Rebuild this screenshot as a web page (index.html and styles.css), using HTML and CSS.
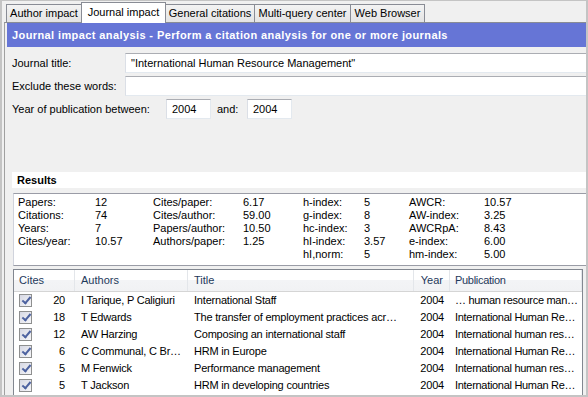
FILE: index.html
```html
<!DOCTYPE html>
<html lang="en">

<head>
  <meta charset="UTF-8">
  <title>Journal impact</title>
  <link rel="stylesheet" href="styles.css">
</head>

<body>

  <div class="window">
    <div class="tabs">
      <div class="tab tab-author">Author impact</div>
      <div class="tab tab-journal active">Journal impact</div>
      <div class="tab tab-general">General citations</div>
      <div class="tab tab-multi">Multi-query center</div>
      <div class="tab tab-web">Web Browser</div>
    </div>

    <div class="panel">
      <div class="banner">Journal impact analysis - Perform a citation analysis for one or more journals</div>

      <div class="form">
        <div class="row">
          <span class="label">Journal title:</span>
          <div class="field wide">"International Human Resource Management"</div>
        </div>
        <div class="row">
          <span class="label">Exclude these words:</span>
          <div class="field wide"></div>
        </div>
        <div class="row">
          <span class="label label-year">Year of publication between:</span>
          <div class="field year">2004</div>
          <span class="label-and">and:</span>
          <div class="field year">2004</div>
        </div>
      </div>

      <div class="results-head">Results</div>

      <div class="stats">
        <span>Papers:</span><span>12</span><span>Cites/paper:</span><span>6.17</span><span>h-index:</span><span>5</span><span>AWCR:</span><span>10.57</span>
        <span>Citations:</span><span>74</span><span>Cites/author:</span><span>59.00</span><span>g-index:</span><span>8</span><span>AW-index:</span><span>3.25</span>
        <span>Years:</span><span>7</span><span>Papers/author:</span><span>10.50</span><span>hc-index:</span><span>3</span><span>AWCRpA:</span><span>8.43</span>
        <span>Cites/year:</span><span>10.57</span><span>Authors/paper:</span><span>1.25</span><span>hI-index:</span><span>3.57</span><span>e-index:</span><span>6.00</span>
        <span></span><span></span><span></span><span></span><span>hI,norm:</span><span>5</span><span>hm-index:</span><span>5.00</span>
      </div>

      <div class="list">
        <div class="list-row list-head">
          <div class="col col-cites">Cites</div>
          <div class="col col-authors">Authors</div>
          <div class="col col-title">Title</div>
          <div class="col col-year">Year</div>
          <div class="col col-pub">Publication</div>
        </div>

        <div class="list-row">
          <div class="col col-cites"><span class="check"></span><span class="num">20</span></div>
          <div class="col col-authors">I Tarique, P Caligiuri</div>
          <div class="col col-title">International Staff</div>
          <div class="col col-year">2004</div>
          <div class="col col-pub">… human resource man…</div>
        </div>
        <div class="list-row">
          <div class="col col-cites"><span class="check"></span><span class="num">18</span></div>
          <div class="col col-authors">T Edwards</div>
          <div class="col col-title">The transfer of employment practices acr…</div>
          <div class="col col-year">2004</div>
          <div class="col col-pub">International Human Re…</div>
        </div>
        <div class="list-row">
          <div class="col col-cites"><span class="check"></span><span class="num">12</span></div>
          <div class="col col-authors">AW Harzing</div>
          <div class="col col-title">Composing an international staff</div>
          <div class="col col-year">2004</div>
          <div class="col col-pub">International human res…</div>
        </div>
        <div class="list-row">
          <div class="col col-cites"><span class="check"></span><span class="num">6</span></div>
          <div class="col col-authors">C Communal, C Br…</div>
          <div class="col col-title">HRM in Europe</div>
          <div class="col col-year">2004</div>
          <div class="col col-pub">International Human Re…</div>
        </div>
        <div class="list-row">
          <div class="col col-cites"><span class="check"></span><span class="num">5</span></div>
          <div class="col col-authors">M Fenwick</div>
          <div class="col col-title">Performance management</div>
          <div class="col col-year">2004</div>
          <div class="col col-pub">International human res…</div>
        </div>
        <div class="list-row">
          <div class="col col-cites"><span class="check"></span><span class="num">5</span></div>
          <div class="col col-authors">T Jackson</div>
          <div class="col col-title">HRM in developing countries</div>
          <div class="col col-year">2004</div>
          <div class="col col-pub">International Human Re…</div>
        </div>
      </div>
    </div>
  </div>

</body>

</html>
```

FILE: styles.css
```css
* {
  margin: 0;
  padding: 0;
  box-sizing: border-box;
}

body {
  width: 588px;
  height: 397px;
  overflow: hidden;
  background: #f0f0f0;
  font-family: "Liberation Sans", Arial, sans-serif;
  font-size: 11px;
  color: #000;
}

.window {
  width: 588px;
  height: 397px;
  border: 2px solid #c4c4c4;
  border-top-width: 1px;
  overflow: hidden;
}

/* tabs */
.tabs {
  display: flex;
  align-items: flex-end;
  height: 21px;
  padding-left: 4px;
}

.tab {
  height: 18px;
  line-height: 17px;
  text-align: center;
  border: 1px solid #898c95;
  border-bottom: 0;
  background: linear-gradient(#f3f3f3, #e4e4e4);
  margin-left: -1px;
}

.tab:first-child {
  margin-left: 0;
}

.tab.active {
  position: relative;
  z-index: 1;
  height: 21px;
  line-height: 18px;
  margin-bottom: -1px;
  background: #fff;
}

.tab-author { width: 76px; }
.tab-journal { width: 85px; }
.tab-general { width: 90px; }
.tab-multi { width: 97px; }
.tab-web { width: 75px; }

/* panel */
.panel {
  margin-left: 2px;
  height: 380px;
  border-top: 1px solid #898c95;
  border-left: 1px solid #a0a0a0;
}

.banner {
  margin-left: 2px;
  height: 24px;
  line-height: 24px;
  padding-left: 5px;
  background: #6675d6;
  color: #fff;
  font-weight: bold;
  letter-spacing: 0.4px;
  white-space: nowrap;
}

.form {
  display: flex;
  flex-direction: column;
  gap: 3px;
  padding: 6px 0 0 7px;
}

.row {
  display: flex;
  align-items: center;
  height: 20px;
}

.label {
  width: 113px;
  flex-shrink: 0;
}

.label.label-year {
  width: 154px;
}

.label-and {
  width: 30px;
  padding-left: 6px;
  box-sizing: content-box;
}

.field {
  height: 20px;
  line-height: 18px;
  padding-left: 5px;
  background: #fff;
  border: 1px solid #e3e9ef;
  border-top-color: #abadb3;
  border-left-color: #dbdfe6;
  white-space: nowrap;
}

.field.wide {
  width: 470px;
  flex-shrink: 0;
}

.field.year {
  width: 45px;
}

/* results */
.results-head {
  margin: 53px 0 0 7px;
  height: 16px;
  line-height: 16px;
  padding-left: 5px;
  background: #fff;
  font-weight: bold;
}

.stats {
  display: grid;
  grid-template-columns: 77px 58px 90px 60px 61px 45px 75px auto;
  grid-auto-rows: 13px;
  line-height: 13px;
  margin: 5px 0 0 8px;
  height: 73px;
  padding: 2px 0 0 4px;
  background: #fff;
  border-top: 1px solid #9a9ca6;
  border-bottom: 1px solid #9a9ca6;
  border-left: 1px solid #d0d3dc;
}

/* list view */
.list {
  margin: 3px 0 0 8px;
  width: 570px;
  height: 140px;
  background: #fff;
  border: 1px solid #828790;
}

.list-row {
  display: flex;
  height: 17px;
  line-height: 17px;
  white-space: nowrap;
  letter-spacing: -0.2px;
}

.list-row.list-head {
  height: 22px;
  line-height: 21px;
  letter-spacing: 0;
  background: linear-gradient(#fff, #fff 50%, #f3f4f6 50%, #f1f2f4);
  border-bottom: 1px solid #d5d5d5;
}

.list-head .col {
  border-right: 1px solid #e3e6ea;
  color: #1e395b;
}

.list-row .col {
  overflow: hidden;
  padding-left: 6px;
}

.col-cites { width: 61px; }
.col-authors { width: 113px; }
.col-title { width: 226px; }
.col-year { width: 36px; }
.col-pub { flex: 1; }

.list-row .col.col-pub {
  padding-left: 5px;
  letter-spacing: -0.3px;
}

.list-row .col.col-year {
  text-align: right;
  padding: 0 6px 0 0;
}

.list-head .col.col-cites {
  padding-left: 7px;
}

.list-row .col.col-cites {
  display: flex;
  align-items: center;
  padding-left: 5px;
}

.num {
  flex: 1;
  text-align: right;
  padding-right: 10px;
}

.check {
  position: relative;
  width: 13px;
  height: 13px;
  border: 1px solid #8e8f8f;
  background: linear-gradient(135deg, #d6d8e4, #f6f6f8);
}

.check::after {
  content: '';
  position: absolute;
  left: 4px;
  top: 0;
  width: 3px;
  height: 7px;
  border: solid #4d62a0;
  border-width: 0 2px 2px 0;
  transform: rotate(40deg);
}
```
